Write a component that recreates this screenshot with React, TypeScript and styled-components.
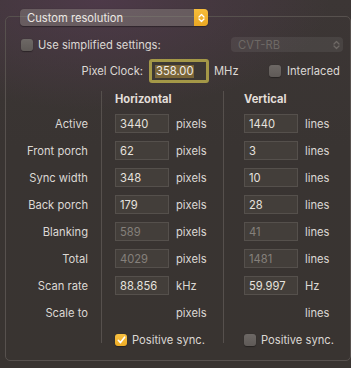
import React from "react";
import styled, { createGlobalStyle } from "styled-components";

const Global = createGlobalStyle`
  html, body { margin: 0; padding: 0; }
  body {
    width: 351px; height: 368px; overflow: hidden;
    background: #3a3532;
    font-family: Inter, "Liberation Sans", sans-serif;
    -webkit-font-smoothing: antialiased;
  }
`;

const FS = "11.2px";

const Window = styled.div`
  width: 351px;
  height: 368px;
  box-sizing: border-box;
  padding: 16px 0 0 5px;
  background:
    radial-gradient(ellipse 230px 110px at 100px 0px, rgba(80, 58, 76, 0.85) 0%, rgba(80, 58, 76, 0) 100%),
    linear-gradient(#3c3635, #393432 40%, #393431);
`;

const Box = styled.div`
  position: relative;
  width: 346px;
  height: 345px;
  box-sizing: border-box;
  border: 1px solid #57514e;
  border-radius: 5px;
  padding: 20px 7px 0 15px;
`;

const PopupButton = styled.div`
  position: absolute;
  top: -8px;
  left: 14px;
  width: 188px;
  height: 17px;
  border-radius: 4px;
  background: rgba(150, 142, 138, 0.42);
  box-shadow: 0 0.5px 1px rgba(0, 0, 0, 0.35);
  display: flex;
  align-items: center;
  box-sizing: border-box;
  padding-left: 7px;
  color: #ece8e4;
  font-size: ${FS};
  overflow: hidden;
`;

const PopupText = styled.span`
  flex: 1;
`;

const PopupArrows = styled.span<{ $accent?: boolean }>`
  width: 14px;
  height: 100%;
  display: flex;
  align-items: center;
  justify-content: center;
  background: ${(p) => (p.$accent ? "linear-gradient(#f6bd3a, #eaa823)" : "transparent")};
`;

const SmallPopup = styled.div`
  width: 112px;
  height: 15px;
  border-radius: 4px;
  background: rgba(255, 255, 255, 0.07);
  display: flex;
  align-items: center;
  box-sizing: border-box;
  padding-left: 7px;
  color: #6e6965;
  font-size: ${FS};
`;

const SettingsRow = styled.div`
  display: flex;
  align-items: center;
  justify-content: space-between;
  height: 15px;
`;

const CheckLabel = styled.label<{ $gap?: number }>`
  display: flex;
  align-items: center;
  gap: ${(p) => p.$gap ?? 5}px;
  color: #dcd8d4;
  font-size: ${FS};
`;

const CheckBox = styled.span<{ $checked?: boolean }>`
  width: 12px;
  height: 12px;
  box-sizing: border-box;
  border-radius: 3px;
  display: flex;
  align-items: center;
  justify-content: center;
  background: ${(p) => (p.$checked ? "linear-gradient(#f7c041, #eeac25)" : "linear-gradient(#6d6865, #5f5a57)")};
  box-shadow: 0 0.5px 1px rgba(0, 0, 0, 0.35);
`;

const ClockRow = styled.div`
  display: flex;
  align-items: center;
  height: 24px;
  margin-top: 7px;
`;

const ClockLabel = styled.span`
  width: 122px;
  margin-right: 6px;
  text-align: right;
  color: #dcd8d4;
  font-size: ${FS};
`;

const FocusField = styled.div`
  width: 60px;
  height: 24px;
  box-sizing: border-box;
  border: 3px solid #a49847;
  border-radius: 3px;
  background: #3d3834;
  display: flex;
  align-items: center;
  padding-left: 3px;
`;

const Selected = styled.span`
  background: #7a6538;
  color: #f2eee9;
  font-size: ${FS};
  line-height: 13px;
  padding: 0 1px;
`;

const Unit = styled.span`
  color: #dcd8d4;
  font-size: ${FS};
`;

const ClockUnit = styled(Unit)`
  margin-left: 5px;
  width: 55px;
`;

const Table = styled.div`
  display: grid;
  grid-template-columns: 80px 1px 121px 1px 1fr;
  grid-template-rows: 15px repeat(9, 19px);
  row-gap: 8px;
  margin-top: 8px;
  margin-left: -15px;
  padding-left: 15px;
`;

const Divider = styled.div<{ $col: number }>`
  grid-column: ${(p) => p.$col};
  grid-row: 1 / -1;
  background: #56504d;
  margin-bottom: 6px;
`;

const RowLabel = styled.div<{ $row: number }>`
  grid-column: 1;
  grid-row: ${(p) => p.$row};
  padding-right: 13px;
  color: #dcd8d4;
  font-size: ${FS};
  display: flex;
  align-items: center;
  justify-content: flex-end;
`;

const Cell = styled.div<{ $col: number; $row: number; $pad: number }>`
  grid-column: ${(p) => p.$col};
  grid-row: ${(p) => p.$row};
  padding-left: ${(p) => p.$pad}px;
  display: flex;
  align-items: center;
  gap: 7px;
`;

const Header = styled.div<{ $col: number; $pad: number }>`
  grid-column: ${(p) => p.$col};
  grid-row: 1;
  padding-left: ${(p) => p.$pad}px;
  font-weight: 700;
  font-size: ${FS};
  color: #e2ded9;
  display: flex;
  align-items: center;
`;

const Field = styled.div<{ $disabled?: boolean; $empty?: boolean }>`
  width: 54px;
  height: 19px;
  box-sizing: border-box;
  border: ${(p) => (p.$empty ? "none" : "1px solid #55504c")};
  background: ${(p) => (p.$empty ? "transparent" : "#433e3a")};
  color: ${(p) => (p.$disabled ? "#85807b" : "#e6e2de")};
  font-size: ${FS};
  display: flex;
  align-items: center;
  padding-left: 4px;
  flex-shrink: 0;
`;

const Chevrons = ({ color }: { color: string }) => (
  <svg width="7" height="10" viewBox="0 0 7 10">
    <path d="M1 4 L3.5 1.5 L6 4 M1 6 L3.5 8.5 L6 6" fill="none" stroke={color} strokeWidth="1.3" strokeLinecap="round" strokeLinejoin="round" />
  </svg>
);

const Check = () => (
  <svg width="9" height="8" viewBox="0 0 9 8">
    <path d="M1.3 4.3 L3.5 6.6 L7.6 1.2" fill="none" stroke="#fff" strokeWidth="1.6" strokeLinecap="round" strokeLinejoin="round" />
  </svg>
);

type Row = {
  label: string;
  h?: string;
  v?: string;
  hu: string;
  vu: string;
  disabled?: boolean;
};

const rows: Row[] = [
  { label: "Active", h: "3440", v: "1440", hu: "pixels", vu: "lines" },
  { label: "Front porch", h: "62", v: "3", hu: "pixels", vu: "lines" },
  { label: "Sync width", h: "348", v: "10", hu: "pixels", vu: "lines" },
  { label: "Back porch", h: "179", v: "28", hu: "pixels", vu: "lines" },
  { label: "Blanking", h: "589", v: "41", hu: "pixels", vu: "lines", disabled: true },
  { label: "Total", h: "4029", v: "1481", hu: "pixels", vu: "lines", disabled: true },
  { label: "Scan rate", h: "88.856", v: "59.997", hu: "kHz", vu: "Hz" },
  { label: "Scale to", hu: "pixels", vu: "lines" },
];

export default function App() {
  return (
    <Window>
      <Global />
      <Box>
        <PopupButton>
          <PopupText>Custom resolution</PopupText>
          <PopupArrows $accent>
            <Chevrons color="#ffffff" />
          </PopupArrows>
        </PopupButton>

        <SettingsRow>
          <CheckLabel>
            <CheckBox />
            Use simplified settings:
          </CheckLabel>
          <SmallPopup>
            <PopupText>CVT-RB</PopupText>
            <PopupArrows>
              <Chevrons color="#6e6965" />
            </PopupArrows>
          </SmallPopup>
        </SettingsRow>

        <ClockRow>
          <ClockLabel>Pixel Clock:</ClockLabel>
          <FocusField>
            <Selected>358.00</Selected>
          </FocusField>
          <ClockUnit>MHz</ClockUnit>
          <CheckLabel $gap={6}>
            <CheckBox />
            Interlaced
          </CheckLabel>
        </ClockRow>

        <Table>
          <Divider $col={2} />
          <Divider $col={4} />
          <Header $col={3} $pad={13}>Horizontal</Header>
          <Header $col={5} $pad={20}>Vertical</Header>
          {rows.map((r, i) => (
            <React.Fragment key={r.label}>
              <RowLabel $row={i + 2}>{r.label}</RowLabel>
              <Cell $col={3} $row={i + 2} $pad={13}>
                <Field $disabled={r.disabled} $empty={r.h === undefined}>{r.h}</Field>
                <Unit>{r.hu}</Unit>
              </Cell>
              <Cell $col={5} $row={i + 2} $pad={20}>
                <Field $disabled={r.disabled} $empty={r.v === undefined}>{r.v}</Field>
                <Unit>{r.vu}</Unit>
              </Cell>
            </React.Fragment>
          ))}
          <Cell $col={3} $row={10} $pad={13}>
            <CheckLabel>
              <CheckBox $checked>
                <Check />
              </CheckBox>
              Positive sync.
            </CheckLabel>
          </Cell>
          <Cell $col={5} $row={10} $pad={20}>
            <CheckLabel>
              <CheckBox />
              Positive sync.
            </CheckLabel>
          </Cell>
        </Table>
      </Box>
    </Window>
  );
}
